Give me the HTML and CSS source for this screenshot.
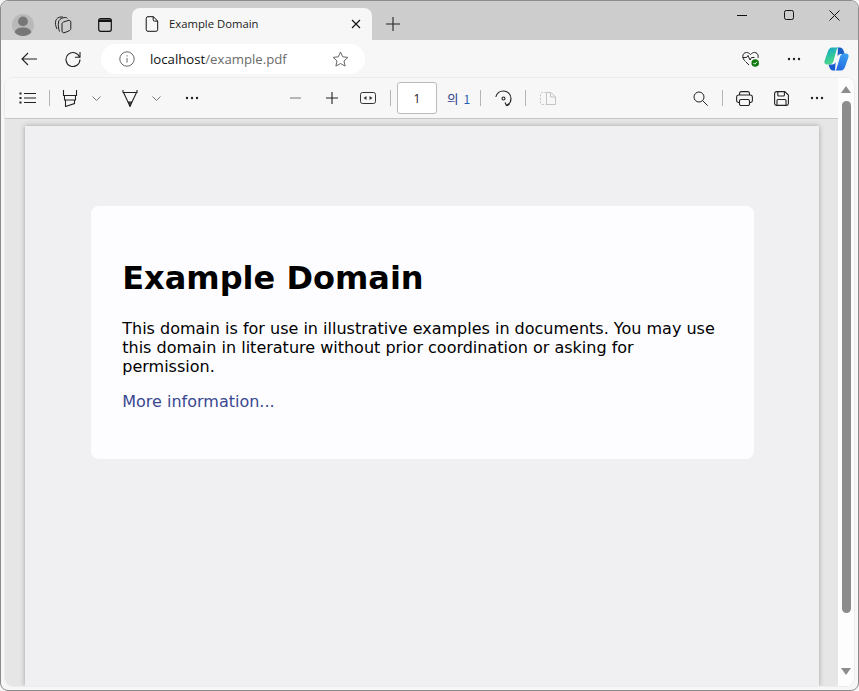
FILE: index.html
```html
<!DOCTYPE html>
<html lang="en">
<head>
<meta charset="utf-8">
<title>Example Domain</title>
<link rel="stylesheet" href="styles.css">
</head>
<body>
<div class="window">
  <header class="tabstrip">
    <div class="avatar"><svg width="34" height="34" viewBox="0 0 34 34"><circle cx="17" cy="17" r="11" fill="#b9b9b9"/><circle cx="17" cy="13.4" r="4.9" fill="#777"/><path d="M8.6 24.2C9.8 20.8 13 19.6 17 19.6s7.200 1.200 8.400 4.600A11 11 0 0 1 17 28a11 11 0 0 1-8.400-3.800z" fill="#777"/></svg></div>
    <button class="strip-btn workspaces"><svg width="18" height="18" viewBox="0 0 18 18" fill="none" stroke="#222" stroke-width="1"><path d="M8 8c0-1 .5-1.500 1.500-2L14 4.500c1.500-.5 2.800.3 2.800 1.500v6.500c0 1-.5 1.700-1.500 2.200L11 16.500c-1.700.7-3 0-3-1.500z"/><path d="M5.500 15.500C4.500 13 4 9 4.500 6 5 4 6.500 2.500 8.500 2l2.500-.5c1-.2 2 .2 2.500 1"/><path d="M3 13C1.500 10 1 7 1.800 4.500 2.500 2.500 4.500 1 7 1h2"/></svg></button>
    <button class="strip-btn tabs-btn"><svg width="16" height="16" viewBox="0 0 16 16" fill="none" stroke="#111" stroke-width="1.200"><rect x="1.700" y="1.700" width="12.600" height="12.600" rx="2"/><path d="M1.700 3.700h12.600" stroke-width="2.400"/></svg></button>
    <div class="tab">
      <svg class="tab-doc" width="14" height="16" viewBox="0 0 14 16" fill="none" stroke="#111" stroke-width="1"><path d="M3 .7h5.300L12.700 5v8.500a1.800 1.800 0 0 1-1.800 1.800H3a1.800 1.800 0 0 1-1.800-1.800V2.500A1.800 1.800 0 0 1 3 .7z"/><path d="M8.200.7v3.100c0 .8.500 1.300 1.300 1.300h3.200"/></svg>
      <span class="tab-title">Example Domain</span>
      <svg class="tab-close" width="10" height="10" viewBox="0 0 10 10" stroke="#111" stroke-width="1.100"><path d="M1 1l8 8M9 1L1 9"/></svg>
    </div>
    <button class="new-tab"><svg width="14" height="14" viewBox="0 0 14 14" stroke="#222" stroke-width="1.100"><path d="M7 0v14M0 7h14"/></svg></button>
    <div class="caption">
      <svg width="10" height="10" viewBox="0 0 10 10" stroke="#111" stroke-width="1"><path d="M0 5.500h10"/></svg>
      <svg class="c-max" width="10" height="10" viewBox="0 0 10 10" fill="none" stroke="#111" stroke-width="1"><rect x=".5" y=".5" width="9" height="9" rx="1.800"/></svg>
      <svg width="11" height="11" viewBox="0 0 11 11" stroke="#111" stroke-width="1"><path d="M.5.5l10 10M10.500.5l-10 10"/></svg>
    </div>
  </header>

  <nav class="navbar">
    <button class="nav-btn back"><svg width="16" height="14" viewBox="0 0 16 14" fill="none" stroke="#222" stroke-width="1.100"><path d="M16 7H1M7 1L1 7l6 6"/></svg></button>
    <button class="nav-btn reload"><svg width="16" height="16" viewBox="0 0 16 16" fill="none" stroke="#222" stroke-width="1.100"><path d="M14.600 6.200A7 7 0 1 0 15 8.400"/><path d="M15 1v5.200H9.900"/></svg></button>
    <div class="omnibox">
      <svg class="info" width="16" height="16" viewBox="0 0 16 16" fill="none" stroke="#666" stroke-width="1"><circle cx="8" cy="8" r="7.200"/><path d="M8 7v4.600M8 4.300v1.200"/></svg>
      <span class="url"><span class="host">localhost</span>/example.pdf</span>
      <svg class="star" width="17" height="16" viewBox="0 0 17 16" fill="none" stroke="#666" stroke-width="1"><path d="M8.500 1l2.200 4.800 5.200.6-3.900 3.500 1.100 5.200-4.600-2.600-4.600 2.600 1.100-5.200L1.100 6.400l5.200-.6z"/></svg>
    </div>
    <div class="nav-right">
      <svg class="health" width="18" height="18" viewBox="0 0 18 18" fill="none" stroke="#222" stroke-width="1"><path d="M3.500 11.500C1.800 9.800.8 8.500.8 6.300.8 4 2.500 2.500 4.500 2.500c1.700 0 2.800.8 4 2 1.200-1.200 2.300-2 4-2 2 0 3.700 1.500 3.700 3.800 0 .7-.1 1.200-.4 1.700"/><path d="M.8 7.500h3.700l1.500-2 2 4.500 1.500-2.500h3"/><path d="M4 12l3 3"/><circle cx="13.200" cy="13" r="3.800" fill="#107c10" stroke="none"/><path d="M11.500 13l1.200 1.200 2.200-2.300" stroke="#fff"/></svg>
      <svg class="dots" width="14" height="4" viewBox="0 0 14 4" fill="#222"><circle cx="2" cy="2" r="1.200"/><circle cx="7" cy="2" r="1.200"/><circle cx="12" cy="2" r="1.200"/></svg>
      <svg class="copilot" width="25" height="24" viewBox="0 0 25 24"><defs><linearGradient id="cg1" x1="0" y1="0" x2="0.400" y2="1"><stop offset="0" stop-color="#1c9fd0"/><stop offset=".55" stop-color="#2cc5a0"/><stop offset="1" stop-color="#55d68a"/></linearGradient><linearGradient id="cg2" x1="0.700" y1="0" x2="0.300" y2="1"><stop offset="0" stop-color="#3aa0f0"/><stop offset="1" stop-color="#2468e0"/></linearGradient></defs><path d="M14 .5h2c2 0 3 1.500 3.500 3l1.200 3.500h-4c-1.500 0-2.700 1-3.200 2.500z" fill="#1b5fc4"/><path d="M11 23.500H9c-2 0-3-1.500-3.500-3L4.500 17.500h4c1.500 0 2.700-1 3.200-2.500z" fill="#1a5ad0"/><path d="M8 .5h7c-1 0-2 1-2.500 2.500L9.500 14c-.5 2-2 3.500-4.500 3.500H3C1 17.500 0 16 .5 14L4 4C5 2 6 .5 8 .5z" fill="url(#cg1)"/><path d="M11 23.500h6c2 0 3-1.500 4-3.500l3.500-10c.5-2-.5-3.500-2.500-3.500h-2c-2 0-3.500 1.500-4 3.500l-3 10c-.5 2-1 3.500-2 3.500z" fill="url(#cg2)"/></svg>
    </div>
  </nav>

  <main class="pane">
    <div class="pdf-toolbar">
      <svg class="t-list" width="18" height="12" viewBox="0 0 18 12" fill="none" stroke="#222" stroke-width="1.100"><path d="M5 1.500h12M5 6h12M5 10.500h12"/><path d="M.5 1.500h2M.5 6h2M.5 10.500h2" stroke-width="1.800"/></svg>
      <i class="sep s1"></i>
      <svg class="t-hl" width="16" height="17" viewBox="0 0 16 17" fill="none" stroke="#222" stroke-width="1.100"><path d="M1.500 0v5.500h13V0M2.500 5.500v4.500h11V5.500M3.500 10v6.500l9-3V10"/></svg>
      <svg class="t-chev c1" width="9" height="5" viewBox="0 0 9 5" fill="none" stroke="#777"><path d="M.5.500l4 4 4-4"/></svg>
      <svg class="t-dr" width="16" height="17" viewBox="0 0 16 17" fill="none" stroke="#222" stroke-width="1.100"><path d="M1 0v2.500h14V0"/><path d="M1.500 2.500L6 12h4l4.500-9.500"/><path d="M6 12l2 4.500 2-4.500" fill="#444"/></svg>
      <svg class="t-chev c2" width="9" height="5" viewBox="0 0 9 5" fill="none" stroke="#777"><path d="M.5.500l4 4 4-4"/></svg>
      <svg class="t-dots d1" width="14" height="4" viewBox="0 0 14 4" fill="#222"><circle cx="2" cy="2" r="1.200"/><circle cx="7" cy="2" r="1.200"/><circle cx="12" cy="2" r="1.200"/></svg>
      <svg class="t-minus" width="11" height="2" viewBox="0 0 11 2" stroke="#777" stroke-width="1.200"><path d="M0 1h11"/></svg>
      <svg class="t-plus" width="12" height="12" viewBox="0 0 12 12" stroke="#222" stroke-width="1.100"><path d="M6 0v12M0 6h12"/></svg>
      <svg class="t-fit" width="16" height="12" viewBox="0 0 16 12" fill="none" stroke="#333" stroke-width="1"><rect x=".5" y=".5" width="15" height="11" rx="2"/><path d="M6.500 4v4L3.500 6zM9.500 4v4l3-2z" fill="#333" stroke="none"/></svg>
      <i class="sep s2"></i>
      <div class="page-box">1</div>
      <span class="page-total"><span class="of">의</span> <span class="tot">1</span></span>
      <i class="sep s3"></i>
      <svg class="t-rot" width="17" height="17" viewBox="0 0 17 17" fill="none" stroke="#222" stroke-width="1.100"><path d="M.8 6.800C2 3 5 1 8.500 1c4 0 7.500 3.200 7.500 7.500 0 3.500-2.500 6-4.500 7"/><path d="M10 12.500l1.500 3 3-1"/><circle cx="8.500" cy="8.500" r="1.500"/></svg>
      <i class="sep s4"></i>
      <svg class="t-two" width="16" height="13" viewBox="0 0 16 13" fill="none" stroke="#c4c4c4" stroke-width="1"><path d="M6.500.5H2A1.500 1.500 0 0 0 .5 2v9A1.500 1.500 0 0 0 2 12.500h4.500" stroke-dasharray="2 1.500"/><path d="M6.500 12.500V.5h4.500l4.500 4.500v7.500z"/><path d="M10.500.5v4.500h5"/></svg>
      <svg class="t-search" width="15" height="15" viewBox="0 0 15 15" fill="none" stroke="#222" stroke-width="1"><circle cx="6" cy="6" r="5"/><path d="M9.700 9.700l5 5"/></svg>
      <i class="sep s5"></i>
      <svg class="t-print" width="17" height="15" viewBox="0 0 17 15" fill="none" stroke="#222" stroke-width="1.100"><path d="M3.500 4V2.500A2 2 0 0 1 5.500.6h6a2 2 0 0 1 2 1.900V4"/><path d="M3.500 11.500H2.500A2 2 0 0 1 .6 9.500V6A2 2 0 0 1 2.500 4h12A2 2 0 0 1 16.400 6v3.500a2 2 0 0 1-1.900 2h-1"/><rect x="3.500" y="8.500" width="10" height="6" rx="1.500"/></svg>
      <svg class="t-save" width="15" height="15" viewBox="0 0 15 15" fill="none" stroke="#222" stroke-width="1.100"><path d="M2.500.6h8.300l3.600 3.500v8.400a2 2 0 0 1-1.900 1.900h-10a2 2 0 0 1-1.900-1.900v-10a2 2 0 0 1 1.900-1.900z"/><path d="M3.800.6v3.400a1 1 0 0 0 1 1h4.600a1 1 0 0 0 1-1V.6"/><path d="M3 14.400V9.500a1 1 0 0 1 1-1h7a1 1 0 0 1 1 1v4.900"/></svg>
      <svg class="t-dots d2" width="14" height="4" viewBox="0 0 14 4" fill="#222"><circle cx="2" cy="2" r="1.200"/><circle cx="7" cy="2" r="1.200"/><circle cx="12" cy="2" r="1.200"/></svg>
    </div>
    <div class="viewer">
      <div class="page">
        <article class="card">
          <h1>Example Domain</h1>
          <p>This domain is for use in illustrative examples in documents. You may use this domain in literature without prior coordination or asking for permission.</p>
          <p class="more"><a href="#">More information...</a></p>
        </article>
      </div>
    </div>
    <div class="scrollbar">
      <i class="arrow up"></i>
      <i class="thumb"></i>
      <i class="arrow down"></i>
    </div>
  </main>
</div>
</body>
</html>
```
FILE: styles.css
```css
* { box-sizing: border-box; }
html, body { margin: 0; height: 100%; background: #f7f7f7; overflow: hidden; }
body { font-family: "Open Sans", "Liberation Sans", sans-serif; color: #111; }
svg { display: block; flex: none; }
button { all: unset; display: flex; align-items: center; justify-content: center; }

.window {
  width: 859px; height: 691px;
  display: flex; flex-direction: column;
  background: #f7f7f7;
  border: 1px solid #8c8c8c;
  border-radius: 8px;
  overflow: hidden;
}

.tabstrip {
  height: 39px; flex: none;
  background: #cdcdcd;
  display: flex; align-items: center;
}
.avatar { width: 34px; height: 34px; margin: 8px 0 0 5px; }
.strip-btn { width: 18px; height: 18px; margin-top: 8px; }
.workspaces { margin-left: 14px; }
.tabs-btn { margin-left: 24px; }
.tab {
  align-self: flex-end;
  width: 240px; height: 32px;
  margin-left: 18px;
  background: #f7f7f7;
  border-radius: 8px 8px 0 0;
  display: flex; align-items: center;
  padding: 0 11px 0 13px;
}
.tab-title { font-size: 11.300px; margin-left: 10px; padding-bottom: 2px; flex: 1; color: #1a1a1a; }
.new-tab { margin: 6px 0 0 14px; }
.caption { margin-left: auto; display: flex; align-items: center; gap: 36px; padding: 0 18px 11px 0; height: 100%; }
.c-max { margin: 0 -1px 0 1px; }

.navbar { height: 38px; flex: none; display: flex; align-items: center; background: #f7f7f7; }
.nav-btn { height: 16px; }
.back { margin-left: 20px; }
.reload { margin-left: 28px; }
.omnibox {
  margin-left: 20px;
  width: 264px; height: 30px;
  background: #fff; border-radius: 15px;
  display: flex; align-items: center;
  padding: 0 16px 0 18px;
}
.url { font-size: 13.200px; color: #6b6b6b; margin-left: 15px; flex: 1; }
.host { color: #111; }
.nav-right { margin-left: auto; display: flex; align-items: center; padding-right: 9px; }
.health { margin-right: 27px; }
.dots { margin-right: 23px; }

.pane {
  flex: 1; min-height: 0;
  margin: 0 4px 4px 4px;
  display: grid;
  grid-template-columns: 1fr 16px;
  grid-template-rows: 41px 1fr;
  background: #fff;
  border-radius: 8px;
  overflow: hidden;
  box-shadow: 0 0 0 1px #ececec;
}
.pdf-toolbar {
  grid-column: 1; grid-row: 1;
  background: #f7f7f7;
  border-bottom: 1px solid #c6c6c6;
  display: flex; align-items: center;
  padding-left: 14px;
}
.sep { display: block; width: 1px; height: 16px; background: #b5b5b5; flex: none; }
.s1 { margin-left: 12px; }
.t-hl { margin-left: 12px; }
.c1 { margin-left: 14px; }
.t-dr { margin-left: 21px; }
.c2 { margin-left: 14px; }
.d1 { margin-left: 24px; }
.t-minus { margin-left: 91px; }
.t-plus { margin-left: 25px; }
.t-fit { margin-left: 22px; }
.s2 { margin-left: 14px; }
.page-box {
  width: 40px; height: 32px; margin-left: 6px;
  background: #fff; border: 1px solid #bbb; border-radius: 3px;
  display: flex; align-items: center; justify-content: center;
  font-size: 12px; color: #222;
}
.page-total { font-family: "Noto Sans CJK KR", "Open Sans", sans-serif; font-size: 12px; margin-left: 10px; white-space: nowrap; display: flex; align-items: center; gap: 5px; }
.of { color: #2b3a85; font-size: 12.500px; }
.tot { color: #1f5fae; }
.s3 { margin-left: 10px; }
.t-rot { margin-left: 14px; }
.s4 { margin-left: 13px; }
.t-two { margin-left: 14px; }
.t-search { margin-left: 137px; }
.s5 { margin-left: 14px; }
.t-print { margin-left: 13px; }
.t-save { margin-left: 21px; }
.d2 { margin-left: 21px; }

.viewer {
  grid-column: 1; grid-row: 2;
  background: #e6e6e6;
  padding: 7px 19px 0 20px;
  min-height: 0; overflow: hidden;
}
.page {
  height: 100%;
  background: #f0f0f2;
  box-shadow: 0 0 5px rgba(0,0,0,.3);
  padding: 80px 65px 0 66px;
}
.card {
  height: 253px;
  background: #fdfcff;
  border-radius: 8px;
  padding: 33px 31.250px 0;
  font-family: "DejaVu Sans", sans-serif;
  color: #000;
}
.card h1 { font-size: 32px; line-height: 37px; margin: 21px 0 22px; font-weight: 700; }
.card p { font-size: 16px; line-height: 19px; margin: 16px 0; }
.card a { color: #38488f; text-decoration: none; }

.scrollbar {
  grid-column: 2; grid-row: 1 / 3;
  background: #fdfdfd;
  display: flex; flex-direction: column; align-items: center;
}
.thumb { display: block; width: 9px; height: 512px; margin-top: 8px; border-radius: 5px; background: #8c8c8c; }
.arrow { display: block; width: 0; height: 0; border-left: 5px solid transparent; border-right: 5px solid transparent; }
.up { border-bottom: 7px solid #8c8c8c; margin-top: 8px; }
.down { border-top: 7px solid #8c8c8c; margin-top: 55px; }
```
